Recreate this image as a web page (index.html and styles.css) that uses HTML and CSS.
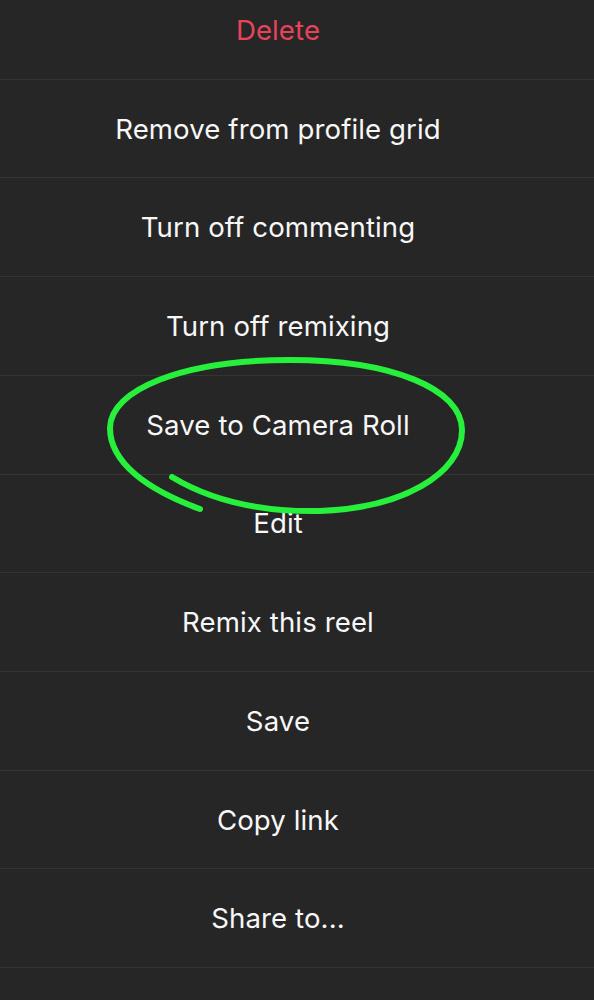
FILE: index.html
```html
<!DOCTYPE html>
<html lang="en">
<head>
    <meta charset="UTF-8">
    <meta name="viewport" content="width=device-width, initial-scale=1.0">
    <title>Reel options</title>
    <link rel="stylesheet" href="styles.css">
</head>
<body>
    <div class="sheet">
        <ul class="menu">
            <li class="item danger">Delete</li>
            <li class="item">Remove from profile grid</li>
            <li class="item">Turn off commenting</li>
            <li class="item">Turn off remixing</li>
            <li class="item">Save to Camera Roll</li>
            <li class="item">Edit</li>
            <li class="item">Remix this reel</li>
            <li class="item">Save</li>
            <li class="item">Copy link</li>
            <li class="item">Share to...</li>
            <li class="item"></li>
        </ul>

        <!-- hand drawn marker circle -->
        <svg class="scribble" width="594" height="1000" viewBox="0 0 594 1000">
            <path d="M172 477 C215 503 268 512 320 511 C402 508 462 474 462 430 C462 389 392 360 290 360 C182 360 110 390 110 428 C110 463 148 490 200 509"
                  fill="none" stroke="#27f03c" stroke-width="6" stroke-linecap="round"/>
        </svg>
    </div>
</body>
</html>
```

FILE: styles.css
```css
body {
    margin: 0;
    background: #262626;
    font-family: Inter, "Noto Sans", sans-serif;
    color: #f7f7f7;
    overflow: hidden;
}
.sheet {
    position: relative;
    height: 1000px;
    overflow: hidden;
}
.menu {
    list-style: none;
    margin: -19px 0 0;
    padding: 0;
}
.item {
    box-sizing: border-box;
    height: 98.72px;
    border-bottom: 1px solid #343434;
    display: flex;
    align-items: center;
    justify-content: center;
    padding-right: 38px;
    font-size: 27.6px;
    letter-spacing: 0.1px;
}
.danger {
    color: #e8435a;
}
.scribble {
    position: absolute;
    left: 0;
    top: 0;
    pointer-events: none;
}
```
